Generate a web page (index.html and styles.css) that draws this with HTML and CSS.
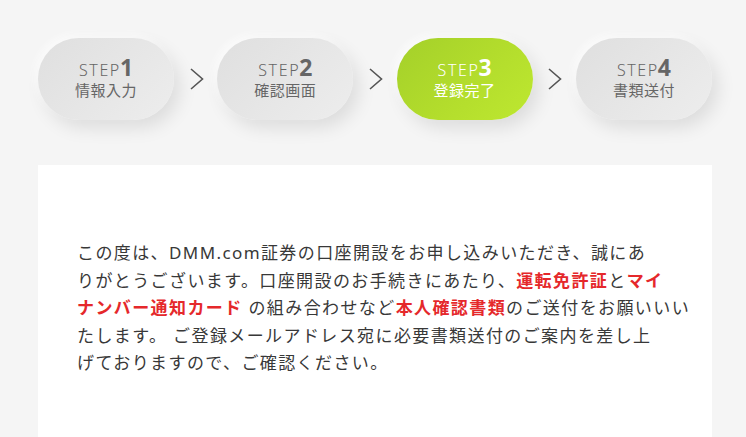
FILE: index.html
```html
<!DOCTYPE html>
<html lang="ja">
<head>
<meta charset="utf-8">
<title>登録完了</title>
<link rel="stylesheet" href="styles.css">
</head>
<body>
<div class="page">
  <ol class="steps">
    <li class="step"><span class="step-label">STEP<b>1</b></span><span class="step-name">情報入力</span></li>
    <li class="arrow"><svg width="14" height="22" viewBox="0 0 14 22"><polyline points="1,1 12.5,11 1,21" fill="none" stroke="#555" stroke-width="1.6"/></svg></li>
    <li class="step"><span class="step-label">STEP<b>2</b></span><span class="step-name">確認画面</span></li>
    <li class="arrow"><svg width="14" height="22" viewBox="0 0 14 22"><polyline points="1,1 12.5,11 1,21" fill="none" stroke="#555" stroke-width="1.6"/></svg></li>
    <li class="step step-active"><span class="step-label">STEP<b>3</b></span><span class="step-name">登録完了</span></li>
    <li class="arrow"><svg width="14" height="22" viewBox="0 0 14 22"><polyline points="1,1 12.5,11 1,21" fill="none" stroke="#555" stroke-width="1.6"/></svg></li>
    <li class="step"><span class="step-label">STEP<b>4</b></span><span class="step-name">書類送付</span></li>
  </ol>
  <section class="card">
    <p class="message">この度は、DMM.com証券の口座開設をお申し込みいただき、誠にあ<br>りがとうございます。口座開設のお手続きにあたり、<strong class="em">運転免許証</strong>と<strong class="em">マイ<br>ナンバー通知カード</strong> の組み合わせなど<strong class="em">本人確認書類</strong>のご送付をお願いいい<br>たします。 ご登録メールアドレス宛に必要書類送付のご案内を差し上<br>げておりますので、ご確認ください。</p>
  </section>
</div>
</body>
</html>
```

FILE: styles.css
```css
html, body {
  margin: 0;
  padding: 0;
}
body {
  background: #f5f5f5;
  font-family: "Noto Sans", "Noto Sans CJK JP", sans-serif;
  color: #333;
  overflow: hidden;
}
.page {
  padding: 38px 0 0 38px;
  width: 674px;
}
.steps {
  list-style: none;
  margin: 0;
  padding: 0;
  display: flex;
  align-items: center;
  justify-content: space-between;
  height: 82px;
}
.step {
  width: 136px;
  height: 82px;
  border-radius: 41px;
  background: linear-gradient(135deg, #dfdfdf 0%, #e6e6e6 50%, #ededed 100%);
  box-shadow: 6px 8px 18px rgba(0, 0, 0, 0.10), -3px -3px 8px rgba(255, 255, 255, 0.8);
  display: flex;
  flex-direction: column;
  align-items: center;
  justify-content: center;
  color: #666;
  padding-bottom: 2px;
  box-sizing: border-box;
}
.step-active {
  background: linear-gradient(135deg, #a4d02a 0%, #b2dc2c 50%, #bee830 100%);
  color: #fff;
}
.step-label {
  font-size: 16px;
  line-height: 22px;
  letter-spacing: 1.6px;
  font-weight: 300;
}
.step-label b {
  font-size: 23px;
  font-weight: 700;
  margin-left: -1px;
  letter-spacing: 0;
}
.step-name {
  font-size: 15px;
  line-height: 19px;
  letter-spacing: 0.5px;
}
.arrow {
  display: flex;
  align-items: center;
  padding-left: 2px;
}
.card {
  margin-top: 45px;
  background: #fff;
  height: 400px;
  padding: 74px 8px 0 39px;
}
.message {
  margin: 0;
  font-size: 17px;
  line-height: 27.5px;
  letter-spacing: 1.4px;
  color: #383838;
  white-space: nowrap;
}
.em {
  color: #e5282b;
  font-weight: 700;
}
```
